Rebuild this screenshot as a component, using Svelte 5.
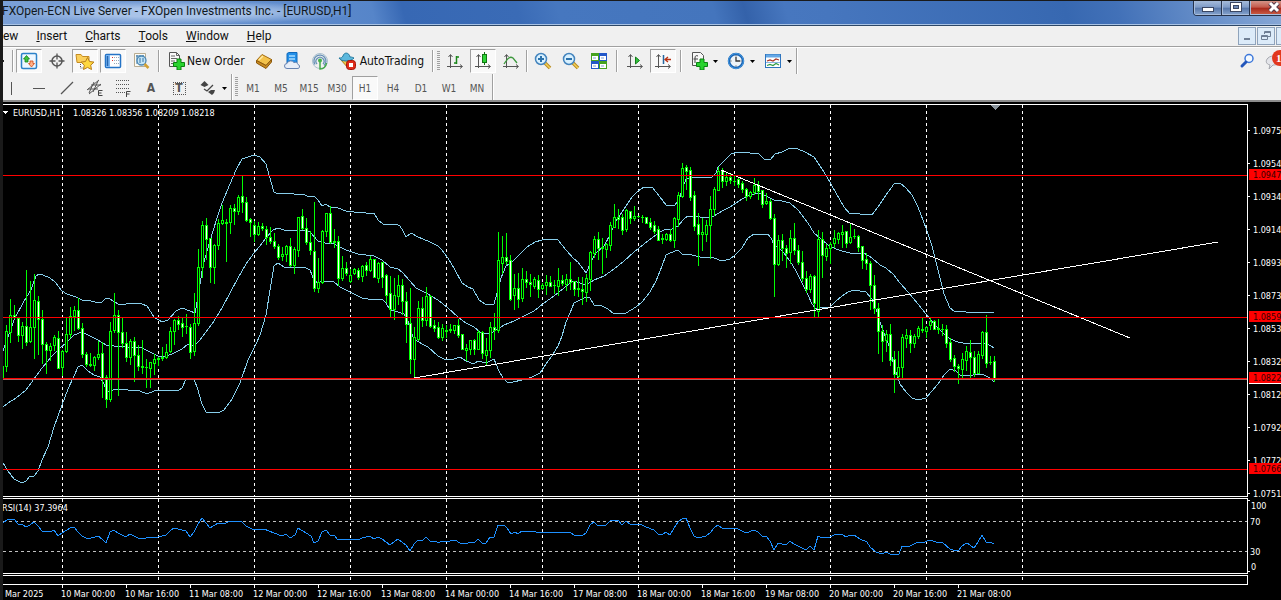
<script>
  // one bar per 4px: high low open close, measured down the price panel
  const bars = `226 238 238 226,185 231 226 191,159 202 192 175,165 178 175 177,178 201 178 195,182 208 195 186,130 205 186 202,141 202 201 187,134 218 187 160,156 214 161 179,170 223 179 204,202 233 204 210,203 220 210 206,195 210 205 197,191 228 198 228,210 235 227 211,178 212 211 194,167 197 194 176,166 190 176 170,158 189 170 188,183 217 188 214,212 226 214 224,213 226 224 225,216 230 225 217,201 219 217 214,202 257 213 238,235 267 237 259,182 261 259 191,153 192 190 175,170 255 175 192,178 207 192 203,192 221 203 217,199 224 217 201,197 241 201 215,205 230 215 226,200 233 226 227,219 247 227 227,222 247 228 222,214 234 223 219,217 225 219 218,207 220 217 218,204 218 217 212,187 212 211 191,179 204 191 180,176 189 180 184,177 196 183 187,174 193 186 186,184 218 187 212,153 215 211 183,109 185 183 127,81 137 127 85,78 119 85 99,98 142 98 127,104 143 127 105,79 109 105 83,65 84 83 80,79 121 83 82,65 93 82 68,64 84 68 71,55 74 71 57,36 72 56 62,57 81 62 80,78 96 79 82,81 101 85 94,82 95 94 86,83 90 86 88,86 104 89 97,87 103 97 101,93 108 101 106,104 119 106 117,107 120 116 114,105 121 114 106,98 126 106 125,107 133 125 109,77 116 110 77,69 89 76 88,78 104 88 102,91 114 102 110,62 151 111 148,118 152 148 142,90 143 142 91,73 96 91 73,66 103 73 102,89 107 101 102,96 145 101 138,116 140 138 128,122 135 128 133,129 142 141 135,128 134 133 129,128 139 130 137,125 141 136 126,122 135 125 130,116 131 130 119,119 137 119 137,122 142 138 123,122 147 122 137,134 162 135 155,136 177 153 169,138 179 169 155,135 164 156 145,139 174 145 161,152 202 161 184,148 233 183 219,187 239 219 197,161 200 199 168,157 186 168 180,147 185 180 156,155 187 156 186,180 191 185 188,182 198 187 197,184 200 197 188,185 197 191 190,184 192 190 189,185 193 190 185,179 197 185 195,194 209 194 209,204 220 210 208,200 214 209 200,199 214 200 209,190 209 209 192,191 218 192 213,198 225 215 210,182 217 210 187,173 199 187 190,92 192 190 120,96 133 123 117,93 124 117 121,115 160 120 159,134 169 155 148,133 167 148 159,128 161 158 139,131 147 139 142,134 156 142 144,137 148 146 139,135 157 140 149,143 149 148 145,135 154 145 142,136 146 142 146,140 153 145 145,128 155 146 140,135 145 140 143,134 150 144 139,122 149 139 142,141 155 141 149,137 156 148 149,137 164 149 151,134 161 152 138,111 150 139 112,96 117 113 99,92 119 99 108,98 133 107 108,103 117 109 104,82 110 105 85,64 87 87 77,69 88 77 79,74 94 77 90,69 91 89 70,71 83 71 78,66 80 78 76,76 77 76 76,75 82 77 77,77 83 77 83,78 89 82 87,81 93 85 91,86 100 89 100,94 103 98 99,93 100 99 94,89 101 94 100,77 107 100 78,52 86 79 55,23 57 56 28,25 49 27 31,27 60 30 57,51 90 55 86,73 125 84 94,78 110 94 92,80 101 94 85,56 118 85 69,47 75 69 49,27 50 50 31,28 47 30 41,33 45 41 37,34 43 37 40,36 45 41 41,38 47 39 44,41 52 43 49,48 60 49 56,51 58 56 52,38 54 52 45,41 59 45 51,50 67 50 64,53 64 63 61,59 79 61 78,74 156 78 124,95 125 124 100,94 120 100 108,105 127 108 113,90 123 112 98,83 114 98 110,105 124 110 122,111 141 122 138,131 152 138 149,134 152 149 136,135 177 136 163,90 176 171 99,92 137 99 115,104 120 116 108,102 123 108 104,90 107 103 98,92 103 99 93,85 107 94 92,91 107 91 103,84 103 102 97,89 98 96 96,95 111 96 107,106 128 106 120,113 129 119 123,121 169 123 145,135 173 145 168,163 213 168 191,185 221 191 201,190 211 200 194,184 225 194 220,211 252 219 234,211 238 236 227,194 237 227 197,189 207 198 195,190 212 195 203,194 207 203 196,186 198 196 188,178 192 189 190,186 197 191 187,178 189 185 181,180 189 181 189,179 193 188 189,184 195 189 189,185 207 189 203,198 221 202 219,215 231 218 226,224 243 226 228,213 237 229 219,206 230 220 211,200 237 212 217,211 236 217 233,211 233 233 214,191 218 215 192,175 227 192 223,216 224 222 222,216 241 221 239`
    .split(",")
    .map((bar, i) => {
      const [high, low, open, close] = bar.split(" ").map(Number);
      return { x: 2 + i * 4, high, low, open, close };
    });

  const bands = [
    "3,211 14,180 24,161 31,150 36,136 39,134 43,135 50,138 55,142 62,151 67,154 76,157 82,160 88,160 98,163 102,162 106,158 110,159 118,164 126,164 132,163 142,164 147,166 154,177 162,182 168,180 176,171 182,168 190,171 195,173 198,157 203,125 210,101 217,78 222,63 230,44 236,30 242,19 248,17 254,15 260,17 266,24 270,38 274,52 278,54 284,53 294,54 302,54 310,57 314,56 318,60 322,66 326,64 330,67 338,68 346,71 354,72 366,73 374,73 378,80 383,84 390,85 396,84 400,86 403,91 406,97 411,93 418,97 430,102 438,106 442,110 448,118 455,130 462,143 468,147 473,149 479,160 485,164 490,165 494,164 497,153 501,138 506,126 512,122 520,114 527,107 535,102 542,100 548,99 558,100 566,110 574,119 578,122 586,133 592,120 596,113 604,106 610,95 616,81 624,69 632,57 638,51 644,47 652,47 660,57 666,65 674,66 679,60 683,47 686,39 692,37 703,37 707,38 712,37 716,33 718,27 724,21 731,14 738,12 747,12 753,14 758,13 764,19 770,20 775,14 782,12 790,8 798,9 805,12 814,17 822,29 827,37 836,53 844,67 850,74 854,73 860,74 872,75 878,67 886,55 894,44 900,43 906,48 912,55 918,67 926,88 932,106 938,130 944,154 950,168 954,171 966,172 978,173 984,172 990,173 994,172",
    "3,267 8,263 16,258 26,250 34,239 42,228 52,216 60,208 66,203 74,195 82,192 90,196 98,200 106,205 114,206 142,208 150,212 158,216 167,216 174,213 182,209 188,204 194,206 200,200 206,192 214,181 222,168 230,153 238,138 246,124 254,113 260,106 266,98 273,90 278,88 284,90 306,90 310,92 318,101 325,103 334,104 346,110 358,114 374,116 382,120 390,127 398,129 402,132 410,141 416,148 426,153 438,160 448,168 458,177 466,183 474,187 480,192 486,194 493,192 504,185 514,181 524,176 534,171 544,163 554,156 564,148 570,143 574,141 580,143 586,145 594,140 604,136 614,129 624,121 634,112 644,104 652,98 660,92 666,89 672,89 678,86 684,79 688,76 694,76 706,78 714,76 722,71 730,67 742,59 750,55 758,53 766,56 774,60 782,61 790,63 798,70 808,83 814,93 820,98 828,105 836,109 842,111 850,113 864,113 872,118 880,125 886,128 894,135 900,143 908,152 918,164 926,174 934,184 942,192 950,199 958,202 968,204 978,203 986,203 994,208",
    "3,323 8,331 14,339 22,343 26,341 30,336 34,336 38,331 42,320 48,307 54,287 62,265 68,249 74,236 78,227 82,225 88,231 94,235 100,237 104,244 107,252 116,249 140,251 147,254 154,251 172,250 178,251 182,248 186,239 194,239 198,250 202,264 206,272 218,273 224,270 232,259 240,243 248,220 256,204 260,195 266,175 271,144 274,126 278,123 284,127 306,128 310,130 314,140 318,143 322,141 334,142 340,147 350,152 362,158 374,160 382,159 386,163 390,170 398,172 404,174 407,178 411,192 414,199 422,204 428,207 438,216 446,220 454,219 460,217 466,221 474,224 478,221 486,223 494,219 499,231 503,238 507,242 513,242 522,240 532,237 540,233 546,224 552,216 558,206 562,196 566,182 570,173 574,163 580,160 586,157 590,158 594,165 602,166 608,169 614,174 626,173 636,167 642,162 650,152 656,141 662,126 666,115 670,113 678,110 682,114 692,115 700,117 714,118 722,121 730,119 734,116 742,108 748,98 754,94 768,94 771,98 774,105 780,109 784,113 790,121 796,131 802,143 808,155 812,164 816,169 820,167 830,167 836,161 842,156 848,152 854,150 866,152 872,159 876,169 880,182 884,193 890,208 894,226 900,244 906,252 912,258 918,260 926,258 932,251 938,244 944,235 950,229 956,231 960,235 968,236 978,234 984,235 990,238 994,242"
  ];

  const rsi =
    "3,33 8,29 14,29 18,34 22,34 26,37 30,35 34,32 38,36 42,41 50,42 54,40 58,46 62,43 70,38 74,37 78,42 82,46 88,49 98,46 102,49 106,53 110,42 114,40 118,43 126,47 130,44 138,48 146,48 158,47 166,45 170,41 174,38 186,41 190,47 194,42 198,34 202,28 206,33 210,38 218,33 226,33 230,31 234,32 238,31 242,32 246,36 254,40 264,39 274,43 282,46 286,44 290,48 295,45 298,38 306,43 311,46 314,53 318,51 322,42 326,40 330,45 334,45 338,50 354,49 358,50 362,48 370,46 374,49 378,47 382,49 390,55 398,49 406,55 410,61 414,54 418,50 422,51 426,47 430,51 436,51 438,53 442,51 450,51 455,50 460,53 466,54 470,52 474,53 478,49 482,53 486,53 490,47 494,47 498,35 504,35 507,38 511,44 515,42 518,44 522,41 530,42 534,41 538,43 542,42 550,43 562,42 570,42 574,45 582,46 586,43 590,35 594,32 598,36 606,35 611,30 618,30 622,35 626,31 630,34 640,34 646,37 654,40 658,44 662,45 666,42 670,45 674,38 678,32 683,28 686,28 690,38 694,46 698,48 706,46 710,43 714,38 718,35 722,38 730,38 738,39 746,43 754,40 758,42 762,46 766,46 770,51 774,60 778,53 786,55 790,51 794,54 800,57 806,60 810,56 814,60 818,46 822,48 830,47 834,45 842,44 846,47 850,45 854,45 860,49 867,52 870,57 876,62 882,64 886,62 890,64 895,65 899,64 902,56 910,56 918,52 922,53 930,50 936,52 943,53 950,59 956,61 959,60 962,56 967,53 974,58 978,52 982,45 986,52 990,52 994,54";

  const dayLines = Array.from({ length: 11 }, (_, i) => 62 + i * 96);
  const levels = [35, 177, 329];
  const prices = [
    "1.0975", "1.0954", "1.0934", "1.0914", "1.0893", "1.0873",
    "1.0853", "1.0832", "1.0812", "1.0792", "1.0772", "1.0751"
  ];
  const tags = [
    { y: 175, label: "1.0947" },
    { y: 317, label: "1.0859" },
    { y: 378, label: "1.0822" },
    { y: 469, label: "1.0766" }
  ];
  const times = [
    "10 Mar 00:00", "10 Mar 16:00", "11 Mar 08:00", "12 Mar 00:00", "12 Mar 16:00",
    "13 Mar 08:00", "14 Mar 00:00", "14 Mar 16:00", "17 Mar 08:00", "18 Mar 00:00",
    "18 Mar 16:00", "19 Mar 08:00", "20 Mar 00:00", "20 Mar 16:00", "21 Mar 08:00"
  ];

  const menus = ["Insert", "Charts", "Tools", "Window", "Help"];
  const periods = ["M1", "M5", "M15", "M30", "H1", "H4", "D1", "W1", "MN"];
  let period = $state("H1");
</script>

{#snippet axes()}
  <path d="M4.5 3v13M1 14.5h15" stroke="#555" fill="none" />
  <path d="M2.5 5l2-2.500 2 2.500M14 12.500l2.500 2-2.500 2" stroke="#555" fill="none" />
{/snippet}

{#snippet caret()}
  <svg class="caret" width="5" height="3" viewBox="0 0 5 3"><path d="M0 0h5L2.5 3z" fill="#000" /></svg>
{/snippet}

<div class="window">
  <header class="titlebar">
    <span class="title">FXOpen-ECN Live Server - FXOpen Investments Inc. - [EURUSD,H1]</span>
    <div class="window-buttons">
      <button aria-label="Minimize">
        <svg width="14" height="12"><rect x="1.5" y="5.5" width="11" height="4" fill="#fff" stroke="#3b4763" /></svg>
      </button>
      <button aria-label="Maximize">
        <svg width="14" height="12"><rect x="1.5" y=".5" width="11" height="9" fill="#fff" stroke="#3b4763" /><rect x="4.5" y="3.5" width="5" height="3" fill="#6d88b5" stroke="#3b4763" /></svg>
      </button>
      <button class="close" aria-label="Close">
        <svg width="14" height="12"><path d="M3 1l8 8M11 1l-8 8" stroke="#54394a" stroke-width="5" /><path d="M3 1l8 8M11 1l-8 8" stroke="#fff" stroke-width="3" /></svg>
      </button>
    </div>
  </header>

  <nav class="menubar">
    <button class="cut">ew</button>
    {#each menus as menu}
      <button><u>{menu[0]}</u>{menu.slice(1)}</button>
    {/each}
    <div class="mdi-buttons">
      <button aria-label="Minimize chart"><svg width="12" height="12"><path d="M3 9h6" stroke="#6f7f95" stroke-width="2" /></svg></button>
      <button aria-label="Restore chart"><svg width="12" height="12"><path d="M4.5 4V1.5h6v5H8M4 2.5h7M1.500 5.5h6v4h-6zM1 6.5h7" stroke="#6f7f95" fill="none" /></svg></button>
      <button aria-label="Close chart"><svg width="12" height="12"><path d="M3 3l6 6M9 3l-6 6" stroke="#6f7f95" stroke-width="2" /></svg></button>
    </div>
  </nav>

  <div class="toolbars">
    <div class="toolbar main">
      <span class="edge"></span>
      <span class="sep"></span>
      <button class="tool pressed" aria-label="Market Watch">
        <svg width="18" height="18"><rect x="1.5" y="1.5" width="15" height="15" rx="1.5" fill="#eef7ff" stroke="#2c82c9" stroke-width="1.5" /><path d="M6.5 3.5l3 3.500H8v3H5V7H3.500z" fill="#3ec43e" stroke="#16801a" stroke-width=".8" /><path d="M11.5 15l3-3.500H13V9h-3v2.500H8.500z" fill="#ffb28a" stroke="#d14713" stroke-width=".8" /></svg>
      </button>
      <button class="tool" aria-label="Crosshair">
        <svg width="18" height="18"><circle cx="9" cy="9" r="5" fill="none" stroke="#555" stroke-width="1.5" /><path d="M9 1.500v6M9 10.500v6M1.500 9h6M10.500 9h6" stroke="#555" stroke-width="1.3" /></svg>
      </button>
      <button class="tool pressed" aria-label="Navigator">
        <svg width="20" height="18"><path d="M1 2.500h5l1.500 2H14v6H2z" fill="#fbd05c" stroke="#c58c22" /><path d="M5.500 12v4h4" stroke="#555" stroke-dasharray="1 1" fill="none" /><path d="M12.500 5.500l2 4 4.500.6-3.300 3.100.8 4.300-4-2.100-4 2.100.8-4.300L6 10.100l4.500-.6z" fill="#ffd83f" stroke="#b97f1b" /></svg>
      </button>
      <button class="tool pressed" aria-label="Data Window">
        <svg width="18" height="18"><rect x="1.500" y="2.500" width="15" height="13" rx="1" fill="#fff" stroke="#2473c6" stroke-width="1.5" /><rect x="2" y="3" width="4" height="12" fill="#79b4f2" /><path d="M3.500 4v10" stroke="#2365ae" stroke-width="1.5" /><path d="M8 5.500h1M8 8.500h1" stroke="#d33" /><path d="M10 5.500h5M10 8.500h5M10 11.500h5" stroke="#9ab" stroke-dasharray="1 1" /></svg>
      </button>
      <button class="tool" aria-label="Strategy Tester">
        <svg width="18" height="18"><path d="M2.500 1.500h11v13h-11z" fill="#fdfbf3" stroke="#b9ac91" /><path d="M4 4h8M5 3v9M8 3v6M11 3v6" stroke="#3f78a8" /><circle cx="9.5" cy="8.5" r="4.5" fill="#bfe3f7" fill-opacity=".9" stroke="#4d88b4" stroke-width="1.3" /><path d="M8 6v5M11 6v4" stroke="#3f78a8" /><path d="M12.500 12l4 4" stroke="#d2a032" stroke-width="2.5" /></svg>
      </button>
      <span class="sep broad"></span>
      <button class="tool wide">
        <svg width="18" height="18"><path d="M1.500.5h7l3 3v11h-10z" fill="#f8f8f8" stroke="#555" /><path d="M8.500.5v3h3M3 4h4M3 6.500h6M3 9h4M3 11.500h3" stroke="#666" fill="none" /><path d="M9 7h4v3.500h3.500v4H13V18H9v-3.500H5.500v-4H9z" fill="#29d32f" stroke="#0a8212" /></svg>
        New Order
      </button>
      <button class="tool" aria-label="MetaEditor">
        <svg width="18" height="18"><path d="M1.500 8.500L7 2.500l9.500 5-5.500 6z" fill="#f3c24b" stroke="#a26b13" /><path d="M1.500 8.500L11 13.500l5.500-6v2.500L11 16.500l-9.500-5.500z" fill="#c98a1f" stroke="#8c590d" /><path d="M4 8l4-4" stroke="#ffe9a6" stroke-width="1.5" /></svg>
      </button>
      <button class="tool" aria-label="Web Trading">
        <svg width="18" height="18"><path d="M4 1.500l2-1h8V11H4z" fill="#2490e8" stroke="#0f68bb" /><path d="M6 4h6M6 7h6" stroke="#a6dcff" stroke-width="1.5" /><path d="M4 16.500a2.500 2.500 0 0 1 0-5 4 4 0 0 1 7-1 3 3 0 0 1 4 2 2 2 0 0 1-1 4z" fill="#e8eef8" stroke="#6783b1" /></svg>
      </button>
      <button class="tool" aria-label="Signals">
        <svg width="18" height="18"><circle cx="9" cy="9" r="7.5" fill="none" stroke="#aac0cf" /><path d="M4 12.500a6 6 0 1 1 9 1M6 12a4 4 0 1 1 6 0" fill="none" stroke="#6690b6" stroke-width="1.3" /><path d="M9 9v8c4 0 6-3 6.500-6" stroke="#43a948" stroke-width="1.5" fill="none" /><circle cx="9" cy="8.5" r="2" fill="#44b14a" /></svg>
      </button>
      <button class="tool wide auto">
        <svg width="18" height="18"><path d="M3 8l8 9 5-8z" fill="#f3c945" stroke="#ac7c17" /><path d="M1 6c2 4 12 4 15 0-2-1-3-1-4-1-1-5-6-5-7-1-1 2-2 2-4 2z" fill="#5cb8dd" stroke="#24799e" /><rect x="8.500" y="8.500" width="9" height="9" rx="3" fill="#e02c1a" stroke="#a4150b" /><rect x="11" y="11" width="4" height="4" fill="#fff" /></svg>
        AutoTrading
      </button>
      <span class="sep tail"></span>
      <span class="grip"></span>
      <button class="tool" aria-label="Bar Chart">
        <svg width="18" height="18">{@render axes()}<path d="M10.500 4v8M10 5h3M8 11h2" stroke="#1a861a" stroke-width="1.5" /></svg>
      </button>
      <button class="tool pressed" aria-label="Candlesticks">
        <svg width="18" height="18">{@render axes()}<path d="M10.500 0v13" stroke="#127412" /><rect x="8.500" y="2.500" width="4" height="8" fill="#2dd436" stroke="#127412" /></svg>
      </button>
      <button class="tool" aria-label="Line Chart">
        <svg width="18" height="18">{@render axes()}<path d="M2 12C6 6 8 4 11 6l4 5" stroke="#3d983d" stroke-width="1.3" fill="none" /></svg>
      </button>
      <span class="sep"></span>
      <button class="tool" aria-label="Zoom In">
        <svg width="18" height="18"><path d="M11 11l5 5" stroke="#b88a20" stroke-width="3.5" /><path d="M11 11l5 5" stroke="#f4d158" stroke-width="1.5" /><circle cx="7" cy="7" r="5.5" fill="#d9f1ff" stroke="#4484bd" stroke-width="1.5" /><path d="M4 7h6M7 4v6" stroke="#2c72ac" stroke-width="2" /></svg>
      </button>
      <button class="tool" aria-label="Zoom Out">
        <svg width="18" height="18"><path d="M11 11l5 5" stroke="#b88a20" stroke-width="3.5" /><path d="M11 11l5 5" stroke="#f4d158" stroke-width="1.5" /><circle cx="7" cy="7" r="5.5" fill="#d9f1ff" stroke="#4484bd" stroke-width="1.5" /><path d="M4 7h6" stroke="#2c72ac" stroke-width="2" /></svg>
      </button>
      <button class="tool" aria-label="Tile Windows">
        <svg width="18" height="18"><path d="M1 1h8v8H1zM9 9h8v8H9z" fill="#45a21f" /><path d="M9 1h8v8H9zM1 9h8v8H1z" fill="#2257c9" /><path d="M2 4h6v4H2zM10 4h6v4h-6zM2 12h6v4H2zM10 12h6v4h-6z" fill="#fff" /><path d="M3 6h3M11 6h3M3 14h3M11 14h3" stroke="#7f9fd0" /></svg>
      </button>
      <span class="sep broad"></span>
      <button class="tool" aria-label="Auto Scroll">
        <svg width="18" height="18">{@render axes()}<path d="M9.500 5l4 3.500-4 3.500z" fill="#32c33b" stroke="#137c1a" /></svg>
      </button>
      <button class="tool pressed" aria-label="Chart Shift">
        <svg width="18" height="18">{@render axes()}<path d="M9.500 3v9" stroke="#2467a1" stroke-width="1.5" /><path d="M17 7.500h-5M14 5l-3 2.500 3 2.500" stroke="#b73215" stroke-width="1.3" fill="none" /></svg>
      </button>
      <span class="sep broad"></span>
      <button class="tool drop" aria-label="Indicators">
        <svg width="18" height="18"><path d="M2.500.5h8l3 3v10h-11z" fill="#f8f8f8" stroke="#555" /><path d="M8 4c-2-1-3 0-3 2v5M3.500 7H8" stroke="#444" fill="none" /><path d="M10 7h4v3.500h3.500v4H14V18h-4v-3.500H6.500v-4H10z" fill="#29d32f" stroke="#0a8212" /></svg>
        {@render caret()}
      </button>
      <button class="tool drop" aria-label="Periods">
        <svg width="18" height="18"><circle cx="9" cy="9" r="7" fill="#edf3f8" stroke="#1763b5" stroke-width="2.5" /><circle cx="9" cy="9" r="7.5" fill="none" stroke="#4a9be0" /><path d="M9 5v4h4" stroke="#333" stroke-width="1.3" fill="none" /><path d="M9 3.500v1M9 13.500v1M3.500 9h1M13.500 9h1" stroke="#444" /></svg>
        {@render caret()}
      </button>
      <button class="tool drop" aria-label="Templates">
        <svg width="18" height="18"><rect x="1.500" y="2.500" width="15" height="13" fill="#fff" stroke="#2e74bd" /><path d="M2 4h14" stroke="#65a8e6" stroke-width="3" /><path d="M3 9l3-1 3 1 3-2 3 1" stroke="#a63324" stroke-width="1.2" fill="none" /><path d="M3 13.500l3-1 3 1 3-2 3 1.500" stroke="#2f9b43" stroke-width="1.2" fill="none" /><path d="M2 10.500h14" stroke="#8bb5de" /></svg>
        {@render caret()}
      </button>
      <span class="sep end"></span>
      <div class="right-tools">
        <button class="tool" aria-label="Search">
          <svg width="16" height="18"><circle cx="10" cy="6.5" r="4" fill="#f4faff" stroke="#3c77da" stroke-width="1.5" /><path d="M7 10l-4 4" stroke="#2356bb" stroke-width="3" stroke-linecap="round" /></svg>
        </button>
        <button class="tool chat" aria-label="Messages">
          <svg width="26" height="22"><path d="M3 8c4-4 12-1 11 4-1 3-4 3-6 3l-4 4 1-4c-4-1-5-4-2-7z" fill="#e4e5ea" stroke="#a5a7ae" /><circle cx="15" cy="8" r="8" fill="#e2371d" /><text x="11" y="12">1</text></svg>
        </button>
      </div>
    </div>

    <div class="toolbar draw">
      <button class="tool" aria-label="Vertical Line"><svg width="18" height="18"><path d="M9.500 3v13" stroke="#555" /></svg></button>
      <button class="tool" aria-label="Horizontal Line"><svg width="18" height="18"><path d="M3 9.500h12" stroke="#555" /></svg></button>
      <button class="tool" aria-label="Trendline"><svg width="18" height="18"><path d="M3 15L15 3" stroke="#555" stroke-width="1.2" /></svg></button>
      <button class="tool" aria-label="Equidistant Channel"><svg width="18" height="18"><path d="M1 11L13 1M3 15L15 5M3 14L8 3M7 13l5-11M2 10h10M5 6h10" stroke="#555" /><path d="M16.500 11.500h-4v5h4M12.500 14h3" stroke="#444" fill="none" /></svg></button>
      <button class="tool" aria-label="Fibonacci Retracement"><svg width="18" height="18"><path d="M2 1.500h14M2 5.500h14M2 9.500h14M2 13.500h9" stroke="#555" stroke-dasharray="1 1" /><path d="M16.500 12.500h-4V18M12.500 15h3" stroke="#444" fill="none" /></svg></button>
      <button class="tool letter">A</button>
      <button class="tool letter boxed"><span>T</span></button>
      <button class="tool drop arrows" aria-label="Arrows">
        <svg width="18" height="18"><path d="M1.500 6l4-4 4 4-4 2zM9 13l3-2h4l-1 3-2 2z" fill="#444" /><path d="M5 10l3 2 6-6" stroke="#444" fill="none" stroke-width="1.3" /></svg>
        {@render caret()}
      </button>
      <span class="sep"></span>
      <span class="grip"></span>
      {#each periods as p}
        <button class="tool period" class:pressed={p === period} onclick={() => (period = p)}>{p}</button>
      {/each}
      <span class="sep"></span>
    </div>
  </div>

  <main class="chart">
    <div class="row price">
      <svg class="plot">
        <g transform="translate(-3 35)">
          {#each dayLines as x}
            <path class="day" d="M{x + 0.5} -35V356" />
          {/each}
          {#each bands as points}
            <polyline class="band" {points} />
          {/each}
          {#each bars as b}
            {@const top = Math.min(b.open, b.close)}
            {@const size = Math.abs(b.open - b.close) + 1}
            <rect x={b.x} y={b.high} width="1" height={b.low - b.high + 1} fill="#0f0" />
            <rect x={b.x - 1} y={top} width="3" height={size} fill="#0f0" />
            {#if size > 2}
              <rect x={b.x} y={top + 1} width="1" height={size - 2} fill={b.close > b.open ? "#fff" : "#000"} />
            {/if}
          {/each}
          <path class="trend" d="M414 238L1218 102M721 30L1130 198" />
          {#each levels as y}
            <rect x="0" {y} width="110%" height="1" fill="#f00" />
          {/each}
          <rect x="0" y="238" width="110%" height="1" fill="#f00" />
          <rect x="0" y="239" width="110%" height="1" fill="#a9635f" />
        </g>
        <path d="M0 6h5L2.500 9z" fill="#fff" />
        <path d="M987 0h10l-5 5z" fill="#8a949c" />
        <text x="10" y="11">EURUSD,H1</text>
        <text x="70" y="11">1.08326 1.08356 1.08209 1.08218</text>
      </svg>
      <svg class="axis">
        {#each prices as price, i}
          <rect x="0" y={26 + i * 33} width="2" height="1" fill="#fff" />
          <text x="5" y={30 + i * 33}>{price}</text>
        {/each}
        <rect x="1" y="274" width="32" height="6" fill="#fff" />
        {#each tags as tag}
          <rect x="1" y={tag.y - 110} width="32" height="11" fill="#f00" />
          <text class="dark" x="5" y={tag.y - 101}>{tag.label}</text>
        {/each}
      </svg>
    </div>

    <div class="row rsi">
      <svg class="plot">
        <path class="level" d="M0 22.500H4000M0 52.500H4000" />
        <g transform="translate(-3 -9)">
          {#each dayLines as x}
            <path class="day" d="M{x + 0.5} 9V90" />
          {/each}
          <polyline class="rsi-line" points={rsi} />
        </g>
        <text x="-1" y="12">RSI(14) 37.3964</text>
      </svg>
      <svg class="axis">
        <rect width="2" y="2" height="1" fill="#fff" />
        <rect width="2" y="73" height="1" fill="#fff" />
        <text x="3" y="11">100</text>
        <text x="2" y="27">70</text>
        <text x="2" y="57">30</text>
        <text x="3" y="72">0</text>
      </svg>
    </div>

    <div class="row strip">
      <svg class="plot">
        {#each dayLines as x}
          <path class="day" d="M{x - 2.5} 1V6" />
        {/each}
      </svg>
    </div>

    <ol class="times">
      <li class="first">Mar 2025</li>
      {#each times as time}
        <li>{time}</li>
      {/each}
    </ol>
  </main>
</div>

<style>
  :global(body) {
    margin: 0;
    background: #1a1a1a;
  }
  .window {
    margin-left: 3px;
    padding-top: 1px;
    overflow: hidden;
    font-family: Roboto, "Open Sans", sans-serif;
    font-size: 12px;
    color: #111;
  }
  button {
    font: inherit;
    color: inherit;
    background: none;
    border: none;
    padding: 0;
    white-space: nowrap;
  }
  svg {
    flex: none;
    display: block;
  }

  .titlebar {
    display: flex;
    justify-content: space-between;
    height: 23px;
    border-bottom: 1px solid #a8c2e4;
    background: linear-gradient(75deg, #7ba0d6 0, #5685c9 360px, #3768b4 390px, #3a6bb6 500px, #4677bf 540px, #4475bd 690px, #3462aa 720px, #4777bf 760px, #4676be 800px, #3768b1 1030px, #4271b8 1080px, #769bd0 1200px, #89a8d5 100%);
  }
  .title {
    line-height: 20px;
    margin-left: -1px;
    white-space: nowrap;
    background: radial-gradient(ellipse, #a9c3e8 30%, transparent 72%);
    color: #101820;
  }
  .window-buttons {
    display: flex;
    flex: none;
    height: 14px;
    margin-right: -18px;
    border: 1px solid #26344d;
    border-top: none;
    border-radius: 0 0 4px 4px;
    overflow: hidden;
  }
  .window-buttons button {
    display: flex;
    justify-content: center;
    align-items: center;
    width: 28px;
    height: 14px;
    background: linear-gradient(#a5bbda, #7e9bc7 45%, #5676a9 50%, #87a5cf);
    border-right: 1px solid #26344d;
    box-sizing: border-box;
    box-shadow: inset 1px -1px 0 #a9bddb;
  }
  .window-buttons .close {
    width: 48px;
    background: linear-gradient(#d49488, #c4594b 45%, #a9281b 50%, #cc6047);
  }

  .menubar {
    display: flex;
    align-items: center;
    height: 20px;
    border-top: 1px solid #2d4766;
    border-bottom: 1px solid #a0a0a0;
    background: #f0f0f0;
  }
  .menubar > button {
    margin: 0 9px;
    line-height: 18px;
  }
  .menubar > .cut {
    margin-left: 0;
  }
  .mdi-buttons {
    display: flex;
    gap: 1px;
    margin-left: auto;
    margin-right: -13px;
  }
  .mdi-buttons button {
    display: flex;
    align-items: center;
    justify-content: center;
    width: 18px;
    height: 18px;
    box-sizing: border-box;
    border: 1px solid #8fa3bb;
    background: #dcebf9;
  }

  .toolbars {
    background: #f0f0f0;
    border-top: 1px solid #fff;
    border-bottom: 2px solid #8c8c8c;
    font-family: "DejaVu Sans Condensed", "Noto Sans", sans-serif;
  }
  .toolbar {
    display: flex;
    align-items: center;
    height: 26px;
  }
  .draw {
    align-items: flex-end;
    margin-left: -6px;
  }
  .tool {
    flex: none;
    display: flex;
    align-items: center;
    justify-content: center;
    width: 28px;
    height: 24px;
    box-sizing: border-box;
  }
  .pressed {
    width: 26px;
    margin: 0 1px;
    background: #f9f9f9;
    border: 1px solid;
    border-color: #a0a0a0 #fff #fff #a0a0a0;
  }
  .tool.wide {
    width: auto;
    gap: 1px;
    padding-left: 5px;
    margin-right: 5px;
  }
  .tool.auto {
    padding-left: 4px;
    margin-right: 0;
    gap: 4px;
  }
  .tool.drop {
    width: 37px;
    gap: 5px;
  }
  .tool.arrows {
    justify-content: flex-start;
    padding-left: 6px;
  }
  .edge {
    width: 1px;
    height: 2px;
    background: #222;
  }
  .sep {
    flex: none;
    width: 1px;
    height: 22px;
    margin: 0 1px;
    background: #a0a0a0;
    border-right: 1px solid #fff;
  }
  .sep.broad {
    margin: 0 3px;
  }
  .edge + .sep {
    margin-left: 8px;
  }
  .sep.tail {
    margin: 0 2px 0 8px;
  }
  .sep.end {
    height: 26px;
    margin: 0;
  }
  .draw .sep {
    height: 26px;
  }
  .grip {
    flex: none;
    align-self: center;
    width: 3px;
    height: 20px;
    margin: 0 1px;
    background: repeating-linear-gradient(#a0a0a0 0 1px, #f0f0f0 1px 2px);
  }
  .right-tools {
    display: flex;
    margin-left: auto;
    margin-right: -10px;
  }
  .tool.chat {
    width: 30px;
    justify-content: flex-end;
  }
  .chat text {
    fill: #fff;
    font: bold 11px "Liberation Serif", serif;
  }
  .draw .tool {
    color: #555;
  }
  .letter {
    font-weight: bold;
    font-size: 12px;
  }
  .boxed span {
    width: 11px;
    line-height: 11px;
    border: 1px dotted #555;
  }
  .period {
    font-size: 10px;
  }

  .chart {
    background: #000;
    color: #fff;
    padding-top: 2px;
    font-family: "DejaVu Sans Condensed", "Noto Sans", sans-serif;
    font-size: 9px;
  }
  .row {
    display: flex;
    margin-bottom: 1px;
  }
  .plot {
    flex: 1;
    min-width: 0;
    height: 391px;
    border: 1px solid #fff;
    border-left: none;
    overflow: hidden;
  }
  .axis {
    width: 33px;
    height: 393px;
  }
  .rsi .plot {
    height: 74px;
  }
  .rsi .axis {
    height: 76px;
  }
  .strip {
    padding-right: 33px;
    margin-bottom: 0;
  }
  .strip .plot {
    height: 8px;
  }
  .plot,
  .axis {
    shape-rendering: crispEdges;
  }
  .row text {
    fill: #fff;
  }
  .row text.dark {
    fill: #300;
  }
  .day {
    stroke: #fff;
    stroke-dasharray: 3 3;
  }
  .level {
    stroke: #c0c0c0;
    stroke-dasharray: 3 3;
  }
  .band,
  .rsi-line,
  .trend {
    fill: none;
    stroke: #87ceeb;
  }
  .rsi-line {
    stroke: #1e90ff;
  }
  .trend {
    stroke: #fff;
  }
  .times {
    display: flex;
    margin: 0;
    padding: 0;
    list-style: none;
    height: 15px;
    overflow: hidden;
  }
  .times li {
    flex: none;
    width: 64px;
    line-height: 19px;
    white-space: nowrap;
    text-indent: -1px;
    background: linear-gradient(#fff, #fff) 0 0 / 1px 3px no-repeat;
  }
  .times .first {
    width: 59px;
    text-indent: 2px;
    background: none;
  }
</style>
